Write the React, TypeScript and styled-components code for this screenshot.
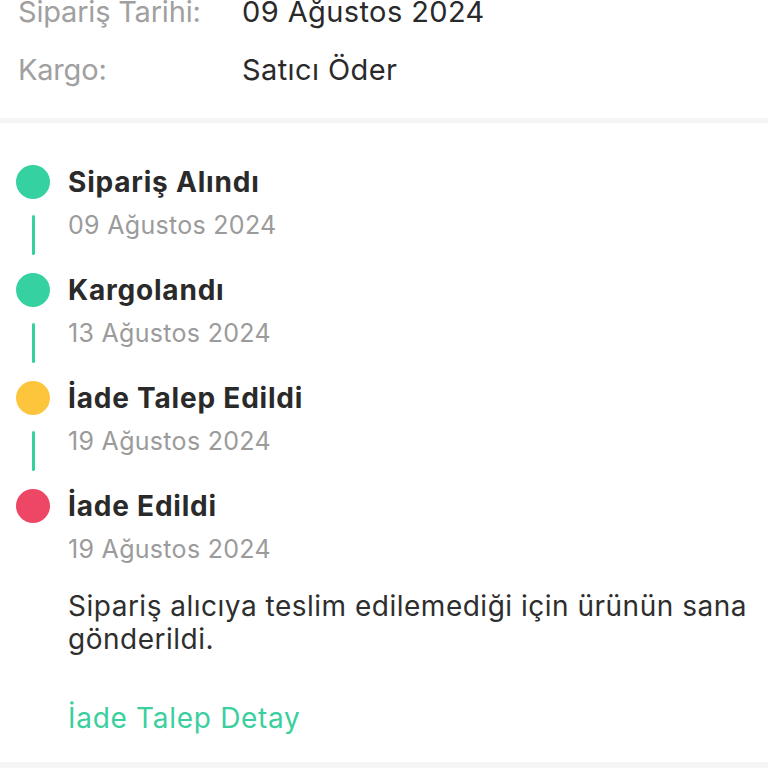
import styled, { createGlobalStyle } from "styled-components";

const GlobalStyle = createGlobalStyle`
  html, body {
    margin: 0;
    padding: 0;
    background: #ffffff;
    overflow: hidden;
  }
  body {
    font-family: "Inter", "Liberation Sans", sans-serif;
    -webkit-font-smoothing: antialiased;
  }
`;

type StepColor = "green" | "yellow" | "red";

const COLORS: Record<StepColor, string> = {
  green: "#35d1a0",
  yellow: "#fcc53c",
  red: "#ee4766",
};

const steps: { title: string; date: string; color: StepColor }[] = [
  { title: "Sipariş Alındı", date: "09 Ağustos 2024", color: "green" },
  { title: "Kargolandı", date: "13 Ağustos 2024", color: "green" },
  { title: "İade Talep Edildi", date: "19 Ağustos 2024", color: "yellow" },
  { title: "İade Edildi", date: "19 Ağustos 2024", color: "red" },
];

function App() {
  return (
    <>
      <GlobalStyle />
      <Styled.Page>
        <Styled.InfoSection>
          <Styled.InfoLabel>Sipariş Tarihi:</Styled.InfoLabel>
          <Styled.InfoValue>09 Ağustos 2024</Styled.InfoValue>
          <Styled.InfoLabel>Kargo:</Styled.InfoLabel>
          <Styled.InfoValue>Satıcı Öder</Styled.InfoValue>
        </Styled.InfoSection>
        <Styled.Divider />
        <Styled.Timeline>
          {steps.map((step, index) => {
            const isLast = index === steps.length - 1;
            return (
              <Styled.Step key={step.title} $last={isLast}>
                <Styled.Dot $color={COLORS[step.color]} />
                <Styled.StepTitle>{step.title}</Styled.StepTitle>
                <Styled.ConnectorCell>
                  {!isLast && <Styled.Connector />}
                </Styled.ConnectorCell>
                <Styled.StepDate>{step.date}</Styled.StepDate>
                {isLast && (
                  <>
                    <span />
                    <Styled.Description>
                      Sipariş alıcıya teslim edilemediği için ürünün sana
                      gönderildi.
                    </Styled.Description>
                    <span />
                    <Styled.DetailLink href="#">İade Talep Detay</Styled.DetailLink>
                  </>
                )}
              </Styled.Step>
            );
          })}
        </Styled.Timeline>
        <Styled.BottomBand />
      </Styled.Page>
    </>
  );
}

export default App;

const Styled = {
  Page: styled.div`
    width: 768px;
    height: 768px;
    display: flex;
    flex-direction: column;
    overflow: hidden;
  `,

  InfoSection: styled.div`
    display: grid;
    grid-template-columns: 224px 1fr;
    row-gap: 22px;
    margin-top: -6px;
    padding: 0 0 30px 18px;
    font-size: 29px;
    line-height: 36px;
  `,

  InfoLabel: styled.span`
    color: #a0a0a0;
    font-weight: 400;
    letter-spacing: -0.2px;
  `,

  InfoValue: styled.span`
    color: #2a2a2a;
    font-weight: 400;
    letter-spacing: 0.4px;
  `,

  Divider: styled.div`
    height: 5px;
    background: #f5f5f5;
  `,

  Timeline: styled.div`
    display: flex;
    flex-direction: column;
    padding: 41px 0 0 16px;
    flex: 1;
  `,

  Step: styled.div<{ $last: boolean }>`
    display: grid;
    grid-template-columns: 34px 1fr;
    column-gap: 18px;
    align-items: start;
    padding-bottom: ${(p) => (p.$last ? "0" : "17px")};
  `,

  Dot: styled.span<{ $color: string }>`
    width: 34px;
    height: 34px;
    margin-top: 1px;
    border-radius: 50%;
    background: ${(p) => p.$color};
  `,

  StepTitle: styled.span`
    font-size: 28px;
    font-weight: 700;
    line-height: 36px;
    letter-spacing: 0.8px;
    color: #2a2a2a;
  `,

  ConnectorCell: styled.div`
    display: flex;
    justify-content: center;
  `,

  Connector: styled.span`
    width: 3px;
    height: 40px;
    margin-top: 15px;
    border-radius: 2px;
    background: #35d1a0;
  `,

  StepDate: styled.span`
    margin-top: 10px;
    font-size: 25px;
    line-height: 30px;
    letter-spacing: 0.3px;
    color: #9b9b9b;
  `,

  Description: styled.p`
    margin: 26px 0 0 0;
    max-width: 690px;
    font-size: 28px;
    line-height: 33px;
    letter-spacing: 0.5px;
    color: #2e2e2e;
  `,

  DetailLink: styled.a`
    margin-top: 47px;
    font-size: 28px;
    line-height: 30px;
    letter-spacing: 0.7px;
    color: #3bcf9e;
    text-decoration: none;
  `,

  BottomBand: styled.div`
    height: 6px;
    background: #f5f5f5;
  `,
};
